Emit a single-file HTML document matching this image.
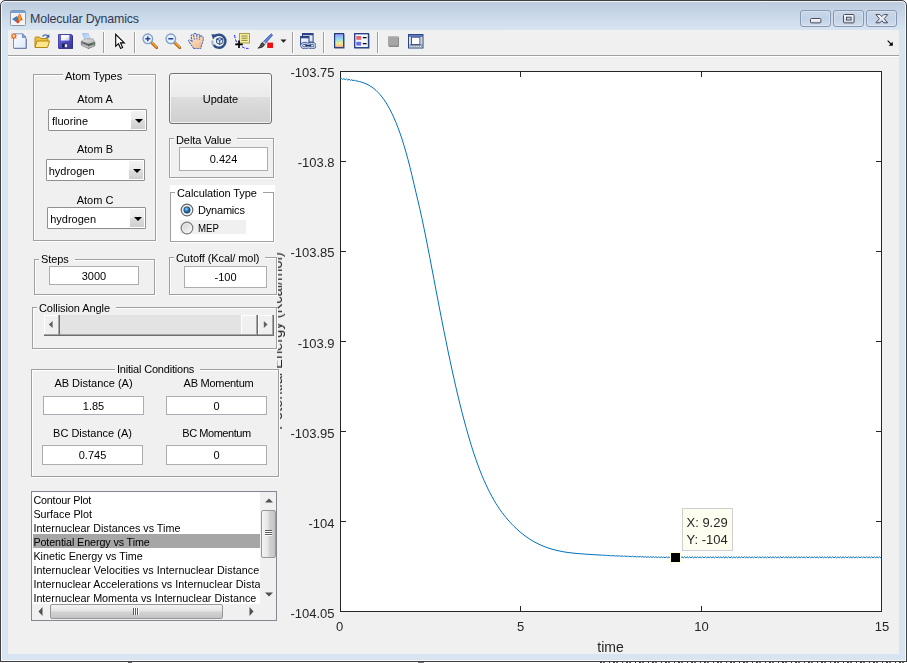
<!DOCTYPE html>
<html><head><meta charset="utf-8"><title>Molecular Dynamics</title>
<style>
html,body{margin:0;padding:0}
body{width:907px;height:663px;overflow:hidden;background:#fff;position:relative;font-family:"Liberation Sans",sans-serif;font-size:11px;color:#000}
.a{position:absolute}
#win{left:0;top:0;width:907px;height:662px;border-radius:5px 5px 0 0;background:linear-gradient(#bccbdc 0px,#c6d5e6 12px,#d7e4f1 30px,#d8e4f2 100%);overflow:hidden}
#hl{left:1px;top:1px;width:905px;height:660px;box-sizing:border-box;border:1px solid rgba(255,255,255,.75);border-radius:4px 4px 0 0}
#client{left:8px;top:30px;width:891px;height:624px;background:#f0f0f0;overflow:hidden}
#title{left:30px;top:11px;font-size:12.4px;color:#2e3a55;line-height:16px;white-space:nowrap;letter-spacing:-0.15px}
.wb{top:10px;width:31px;height:17px;box-sizing:border-box;border:1px solid #8797b4;border-radius:3px;background:linear-gradient(#c9d7e8,#c2d2e5 50%,#cfdcec);box-shadow:inset 0 0 0 1px rgba(255,255,255,.3)}
.lbl{white-space:nowrap;line-height:14px;font-size:11px}
.c{text-align:center}
.panel{box-sizing:border-box;border:1px solid #a0a0a0;box-shadow:1px 1px 0 #fff, inset 1px 1px 0 #fff;background:#f0f0f0}
.ptitle{letter-spacing:-0.08px;background:#f0f0f0;white-space:nowrap;line-height:14px;font-size:11px;padding:0 6px 0 2px}
.edit{box-sizing:border-box;border:1px solid #abadb3;background:#fff;text-align:center;font-size:11px}
.pop{box-sizing:border-box;border:1px solid #8e8f8f;background:#fff;border-radius:1px}
.pop .t{position:absolute;left:3px;top:0;line-height:22px;font-size:11px}
.pop .b{position:absolute;right:1px;top:1px;bottom:1px;width:14px;background:linear-gradient(#f2f2f2,#ebebeb 48%,#dddddd 52%,#cfcfcf);}
.pop .b:after{content:"";position:absolute;left:3.5px;top:8px;border:4px solid transparent;border-top:4px solid #000;border-bottom:0}
.li{left:1px;width:227px;height:14px;line-height:14px;font-size:10.75px;white-space:nowrap;overflow:hidden;padding-left:0.4px;box-sizing:border-box}
.tk{font-size:13.33px;color:#262626;white-space:nowrap;line-height:16px}
.sep{top:2px;width:1px;height:21px;background:#a0a0a0}
</style></head><body>
<div id="win" class="a">
<div id="hl" class="a"></div>
<!-- title bar -->
<svg class="a" style="left:10px;top:10px" width="16" height="16" viewBox="0 0 16 16">
<rect x="0.5" y="0.5" width="15" height="15" rx="1" fill="#f4f4f4" stroke="#8c97a6"/>
<rect x="1" y="1" width="14" height="2" fill="#6fa3d3"/>
<path d="M2 9 L7 6 L9 9 L6 12 Z" fill="#3e7fc4"/>
<path d="M6 12 L9 4 Q10 3 10.6 5 L13 11 Q11.5 9.5 10.5 10.5 Q9 13 7.5 13.5 Z" fill="#d94a1e"/>
<path d="M8.2 8 L9.6 4 Q10 3.6 10.4 5 L11 9 Q10 10 9 12 Z" fill="#f5a623"/>
</svg>
<div id="title" class="a">Molecular Dynamics</div>
<svg width="0" height="0" class="a"><defs><linearGradient id="gl" x1="0" y1="0" x2="0" y2="1"><stop offset="0" stop-color="#ffffff"/><stop offset="1" stop-color="#d2d6dc"/></linearGradient></defs></svg>
<div class="a wb" style="left:800px"><svg class="a" style="left:9px;top:7px" width="12" height="6"><rect x="0.5" y="0.5" width="10.4" height="4.4" rx="1" fill="url(#gl)" stroke="#454b5c"/></svg></div>
<div class="a wb" style="left:833px"><svg class="a" style="left:9px;top:3px" width="12" height="10"><rect x="0.5" y="0.5" width="10.6" height="8.4" rx="1" fill="url(#gl)" stroke="#454b5c"/><rect x="3.5" y="3.2" width="4.6" height="2.8" fill="#c6d5e7" stroke="#454b5c"/></svg></div>
<div class="a wb" style="left:866px"><svg class="a" style="left:8px;top:3px" width="14" height="10" viewBox="0 0 14 10"><path d="M0.9 0.6 H4.9 L6.8 2.6 L8.7 0.6 H12.7 L9.2 4.7 L12.7 8.8 H8.7 L6.8 6.8 L4.9 8.8 H0.9 L4.4 4.7 Z" fill="url(#gl)" stroke="#454b5c" stroke-width="1" stroke-linejoin="round"/></svg></div>

<div id="client" class="a">
<!-- toolbar (client coords: subtract 8,30) -->
<div class="a" id="tb" style="left:0;top:0;width:891px;height:25px;background:#f0f0f0;border-bottom:1px solid #a0a0a0"></div>
<div class="a" style="left:0;top:26px;width:891px;height:1px;background:#fff"></div>
<!-- New -->
<svg class="a" style="left:3px;top:3px" width="16" height="16" viewBox="0 0 16 16">
<defs><linearGradient id="pg" x1="0" y1="0" x2="1" y2="1"><stop offset="0" stop-color="#ffffff"/><stop offset="1" stop-color="#dbe8fb"/></linearGradient></defs>
<path d="M2.5 0.8 H11.4 L15 4.4 V15.2 H2.5 Z" fill="url(#pg)" stroke="#7c90c4" stroke-width="1"/>
<path d="M11.4 0.8 V4.4 H15 Z" fill="#8ea2d6" stroke="#6a80ba" stroke-width=".8" stroke-linejoin="round"/>
<path d="M3 15.6 H15.5 V6" stroke="#5a678f" stroke-width=".9" fill="none" opacity=".75"/>
<circle cx="2.8" cy="3" r="2" fill="#f8d070" stroke="#e2663a" stroke-width="1.1"/>
<path d="M2.8 -0.4 V0.3 M2.8 5.7 V6.4 M-0.6 3 H0.1 M5.5 3 H6.2 M0.3 0.5 L0.9 1.1 M5.3 0.5 L4.7 1.1 M0.3 5.5 L0.9 4.9 M5.3 5.5 L4.7 4.9" stroke="#e2663a" stroke-width="1"/>
</svg>
<!-- Open -->
<svg class="a" style="left:26px;top:3px" width="16" height="16" viewBox="0 0 16 16">
<path d="M8.5 3.5 Q11 0.5 14 3" fill="none" stroke="#4d6fb0" stroke-width="1.3"/>
<path d="M15.3 1 V4.8 H11.6 Z" fill="#3b5fa8"/>
<path d="M1 14 V5 Q1 4 2 4 H5.5 L7 5.5 H13 Q14 5.5 14 6.5 V8" fill="#e9c04a" stroke="#b8860b" stroke-width="1"/>
<path d="M1 14.5 L3 8 H15.5 L13.5 14.5 Z" fill="#fbe68a" stroke="#b8860b" stroke-width="1" stroke-linejoin="round"/>
</svg>
<!-- Save -->
<svg class="a" style="left:49px;top:3px" width="16" height="16" viewBox="0 0 16 16">
<defs><linearGradient id="sv" x1="0" y1="0" x2="1" y2="1"><stop offset="0" stop-color="#7270e2"/><stop offset=".5" stop-color="#4f4dc6"/><stop offset="1" stop-color="#35349a"/></linearGradient><linearGradient id="sl" x1="0" y1="0" x2="1" y2="1"><stop offset="0" stop-color="#ffffff"/><stop offset=".55" stop-color="#f0f2fa"/><stop offset="1" stop-color="#b9c0e0"/></linearGradient></defs>
<path d="M1.5 1.5 H14.4 L15.4 2.5 V15.3 H1.5 Z" fill="url(#sv)" stroke="#3a3aa6" stroke-width=".9"/>
<path d="M15.6 3 V15.7 H2.2" stroke="#23226a" stroke-width=".9" fill="none" opacity=".8"/>
<rect x="4" y="2" width="8.4" height="5.6" fill="url(#sl)"/>
<rect x="5.2" y="10.6" width="5.4" height="3.8" fill="#1e1e38"/>
<rect x="7.8" y="11.2" width="2.4" height="3" fill="#ececf4"/>
</svg>
<!-- Print -->
<svg class="a" style="left:72px;top:3px" width="16" height="16" viewBox="0 0 16 16">
<defs><linearGradient id="pp" x1="0" y1="0" x2="1" y2="1"><stop offset="0" stop-color="#9cc6f6"/><stop offset="1" stop-color="#dcecfc"/></linearGradient><linearGradient id="pt" x1="0" y1="0" x2="1" y2="1"><stop offset="0" stop-color="#e8e8e8"/><stop offset="1" stop-color="#b0b0b0"/></linearGradient></defs>
<path d="M2.4 0.3 H8 L10.4 5.8 L4.6 6.6 Z" fill="url(#pp)" stroke="#9ab4dc" stroke-width=".6"/>
<path d="M1.2 8.4 L5.4 5.8 L13 5.9 L14.9 9.2 L8.5 11.2 Z" fill="url(#pt)" stroke="#8c8c8c" stroke-width=".6" stroke-linejoin="round"/>
<path d="M1.2 8.4 L8.5 11.2 V15.5 L1.5 12.3 Z" fill="#9c9c9c" stroke="#666" stroke-width=".6" stroke-linejoin="round"/>
<path d="M8.5 11.2 L14.9 9.2 V12.7 L8.5 15.5 Z" fill="#7e7e7e" stroke="#5a5a5a" stroke-width=".6" stroke-linejoin="round"/>
<path d="M2.2 9.6 L8.5 12.1 L14 10.4" stroke="#4c4c4c" stroke-width=".9" fill="none"/>
<path d="M2.2 11.3 L8.5 13.7 L14 12 V12.8 L8.5 14.7 L2.2 12.2 Z" fill="#f6f6f6" stroke="#9a9a9a" stroke-width=".4"/>
<rect x="12.2" y="9.7" width="1.3" height="1.3" fill="#35b135"/>
</svg>
<div class="a sep" style="left:95px"></div><div class="a sep" style="left:96px;background:#fff"></div>
<!-- Cursor -->
<svg class="a" style="left:104px;top:3px" width="16" height="16" viewBox="0 0 16 16">
<path d="M3.7 1.3 V13.3 L6.5 10.7 L8.6 15.4 L10.6 14.5 L8.5 9.9 H12.3 Z" fill="#fff" stroke="#000" stroke-width="1.1" stroke-linejoin="miter"/>
</svg>
<div class="a sep" style="left:126px"></div><div class="a sep" style="left:127px;background:#fff"></div>
<!-- Zoom in -->
<svg class="a" style="left:134px;top:3px" width="16" height="16" viewBox="0 0 16 16">
<path d="M9.5 9.5 L14.8 14.8" stroke="#b86a14" stroke-width="3" stroke-linecap="round"/>
<path d="M9.6 9 L14.6 14" stroke="#f2a640" stroke-width="1.3" stroke-linecap="round"/>
<circle cx="5.8" cy="5.8" r="4.8" fill="#e4f1fc" stroke="#7f9fc9" stroke-width="1.3"/>
<path d="M3.3 5.8 H8.3 M5.8 3.3 V8.3" stroke="#2a3f9a" stroke-width="1.4"/>
</svg>
<!-- Zoom out -->
<svg class="a" style="left:157px;top:3px" width="16" height="16" viewBox="0 0 16 16">
<path d="M9.5 9.5 L14.8 14.8" stroke="#b86a14" stroke-width="3" stroke-linecap="round"/>
<path d="M9.6 9 L14.6 14" stroke="#f2a640" stroke-width="1.3" stroke-linecap="round"/>
<circle cx="5.8" cy="5.8" r="4.8" fill="#e4f1fc" stroke="#7f9fc9" stroke-width="1.3"/>
<path d="M3.3 5.8 H8.3" stroke="#2a3f9a" stroke-width="1.4"/>
</svg>
<!-- Hand -->
<svg class="a" style="left:180px;top:3px" width="17" height="16" viewBox="0 0 17 16">
<defs><linearGradient id="hd" x1="0" y1="0" x2="0.6" y2="1"><stop offset="0" stop-color="#fdf0e2"/><stop offset="1" stop-color="#f2bf92"/></linearGradient></defs>
<path d="M6 15.8 L1.8 10 L0.5 7.7 Q0.6 6.4 1.9 6.6 L4.1 8.8 L3 3 Q3.2 1.2 4.6 1.5 L5.5 2.4 L5.8 1 Q7 -0.2 8.4 0.9 L8.8 2.2 Q10.2 0.5 11.4 1.7 L11.8 3.3 Q13.6 2.1 14.8 3.7 Q15.9 6 14.6 9.4 Q13.4 12.4 12.6 15.8 Z" fill="url(#hd)" stroke="#2f55c4" stroke-width="1" stroke-dasharray="2.2 .7" stroke-linejoin="round"/>
<path d="M5.6 2.4 L6.4 6.6 M8.8 2.2 L9 6.4 M11.8 3.3 L11.4 6.8" stroke="#2f55c4" stroke-width=".9" fill="none" stroke-dasharray="2 .8"/>
</svg>
<!-- Rotate -->
<svg class="a" style="left:203px;top:3px" width="16" height="16" viewBox="0 0 16 16">
<path d="M3.6 3.4 A6.5 6.5 0 1 1 2.6 12" fill="none" stroke="#2f4f86" stroke-width="2.4"/>
<path d="M2.2 12.4 A6.5 6.5 0 0 1 1.6 7.6" fill="none" stroke="#9fb2cf" stroke-width="2"/>
<path d="M0.4 1.2 L6 1.6 L2 6.4 Z" fill="#2f4f86"/>
<path d="M5.6 6 L8.8 4.8 L11.8 6 V9.8 L8.7 11.4 L5.6 9.8 Z" fill="#dfe8f6" stroke="#2f4f86" stroke-width="1" stroke-linejoin="round"/>
<path d="M5.6 6 L8.7 7.3 L11.8 6 M8.7 7.3 V11.4" fill="none" stroke="#2f4f86" stroke-width="1"/>
</svg>
<!-- Data cursor -->
<svg class="a" style="left:226px;top:3px" width="16" height="16" viewBox="0 0 16 16">
<path d="M0.6 2 Q1.2 8 4 11 " fill="none" stroke="#1a1aff" stroke-width="1" stroke-dasharray="3 1.5"/>
<path d="M8 13.6 Q10.5 15.6 14.5 15.4" fill="none" stroke="#1a1aff" stroke-width="1" stroke-dasharray="3 1.5"/>
<rect x="5.5" y="0.5" width="10" height="9.5" fill="#f3eea0" stroke="#a79f45" stroke-width="1"/>
<path d="M7.5 3 H13.5 M7.5 5.2 H13.5 M7.5 7.4 H13.5" stroke="#8c8540" stroke-width="1"/>
<path d="M5 7.5 V15 M1.2 11.3 H8.8" stroke="#000" stroke-width="1.7"/>
</svg>
<!-- Brush -->
<svg class="a" style="left:249px;top:3px" width="16" height="16" viewBox="0 0 16 16">
<path d="M14.2 0.8 L15.6 2.2 L8.6 10.2 L6.6 8.4 Z" fill="#5f86d6" stroke="#3555a4" stroke-width=".8"/>
<path d="M6.9 8 L9 10 L7.6 11.6 L5.4 9.6 Z" fill="#c9d2e2" stroke="#6e7890" stroke-width=".6"/>
<path d="M5.4 9.5 L7.7 11.7 Q6 15.2 0.8 15.2 Q3.2 13.6 3.6 11.6 Q4 10 5.4 9.5 Z" fill="#4a4a4a" stroke="#222" stroke-width=".6"/>
<rect x="10.2" y="9.6" width="5.8" height="5.4" fill="#ee1111"/>
</svg>
<svg class="a" style="left:272px;top:9px" width="7" height="5"><path d="M0.5 0.5 H6.5 L3.5 3.8 Z" fill="#222"/></svg>
<div class="a sep" style="left:284px"></div><div class="a sep" style="left:285px;background:#fff"></div>
<!-- Link -->
<svg class="a" style="left:292px;top:3px" width="16" height="16" viewBox="0 0 16 16">
<defs><linearGradient id="wn" x1="0" y1="0" x2="1" y2="1"><stop offset="0" stop-color="#ffffff"/><stop offset="1" stop-color="#d4dff0"/></linearGradient></defs>
<rect x="2.5" y="0.5" width="10.6" height="8.6" fill="url(#wn)" stroke="#2a4488" stroke-width="1"/>
<rect x="2.5" y="0.5" width="10.6" height="1.8" fill="#2a4488"/>
<rect x="0.6" y="3.5" width="8.4" height="8" fill="url(#wn)" stroke="#2a4488" stroke-width="1"/>
<rect x="0.6" y="3.5" width="8.4" height="1.8" fill="#2a4488"/>
<ellipse cx="5" cy="12.6" rx="3.4" ry="2.2" fill="none" stroke="#2c4a88" stroke-width="2.6"/>
<ellipse cx="11.6" cy="12.6" rx="3.4" ry="2.2" fill="none" stroke="#2c4a88" stroke-width="2.6"/>
<ellipse cx="5" cy="12.6" rx="3.4" ry="2.2" fill="none" stroke="#c4d3ea" stroke-width="1.3"/>
<ellipse cx="11.6" cy="12.6" rx="3.4" ry="2.2" fill="none" stroke="#c4d3ea" stroke-width="1.3"/>
<path d="M5.4 12.6 H11.2" stroke="#1c2f60" stroke-width="1.5"/>
</svg>
<div class="a sep" style="left:315px"></div><div class="a sep" style="left:316px;background:#fff"></div>
<!-- Colorbar -->
<svg class="a" style="left:323px;top:3px" width="16" height="16" viewBox="0 0 16 16">
<defs><linearGradient id="cb" x1="0" y1="0" x2="0" y2="1"><stop offset="0" stop-color="#9d98f2"/><stop offset=".2" stop-color="#98b8f4"/><stop offset=".42" stop-color="#92e4e8"/><stop offset=".7" stop-color="#f4ea8c"/><stop offset="1" stop-color="#f7a994"/></linearGradient></defs>
<rect x="3.6" y="0.6" width="9" height="14" fill="url(#cb)" stroke="#1f3a80" stroke-width="1.2"/>
<path d="M4 15.3 H13.3 V1.5" stroke="#7c86a0" fill="none" stroke-width=".8"/>
</svg>
<!-- Legend -->
<svg class="a" style="left:346px;top:3px" width="16" height="16" viewBox="0 0 16 16">
<rect x="0.7" y="0.7" width="13.8" height="14" fill="#f3f6fc" stroke="#1f3a80" stroke-width="1.3"/><path d="M1.2 15.4 H15.2 V1.6" stroke="#6a7696" stroke-width=".8" fill="none" opacity=".7"/>
<rect x="2.3" y="3" width="4.8" height="3.8" fill="#e8636b"/>
<rect x="2.3" y="8.8" width="4.8" height="3.8" fill="#6a6ee6"/>
<path d="M8.8 4.6 H12.6 M8.8 10.7 H12.6" stroke="#000" stroke-width="1.3"/>
</svg>
<div class="a sep" style="left:369px"></div><div class="a sep" style="left:370px;background:#fff"></div>
<!-- gray square -->
<svg class="a" style="left:377px;top:3px" width="16" height="16" viewBox="0 0 16 16">
<rect x="3.5" y="3.5" width="10.5" height="10.5" rx="1" fill="#8a8a8a"/>
<rect x="3" y="3" width="10" height="9.5" rx="1" fill="#a6a6a6"/>
<rect x="3" y="3" width="10" height="1.2" fill="#b8b8b8"/>
</svg>
<!-- film -->
<svg class="a" style="left:400px;top:3px" width="16" height="16" viewBox="0 0 16 16">
<rect x="0.5" y="1.5" width="14.5" height="13.5" fill="#f1f1e6" stroke="#2a4488" stroke-width="1"/>
<rect x="0.5" y="1.5" width="14.5" height="2.2" fill="#2f4f9a"/>
<rect x="1" y="2.3" width="13.5" height=".7" fill="#6f8ccc"/>
<rect x="3.5" y="4.2" width="8.4" height="7.4" fill="#fff" stroke="#2a4488" stroke-width=".9"/>
<path d="M2.2 4.6 V11.4 M13.3 4.6 V11.4" stroke="#2a4488" stroke-width=".7" stroke-dasharray=".8 1.2" opacity=".7"/>
<path d="M1.2 12.1 H14.4" stroke="#2a4488" stroke-width=".8"/>
<path d="M1.6 13.4 H14" stroke="#2a4488" stroke-width=".8" stroke-dasharray=".9 1" opacity=".7"/>
</svg>
<!-- right arrow -->
<svg class="a" style="left:879px;top:9.5px" width="6.6" height="6.6" viewBox="0 0 8 8"><path d="M0.8 0.8 L6 6" stroke="#000" stroke-width="1.4"/><path d="M7 2 V7 H2 Z" fill="#000"/></svg>

<!-- axes -->
<div class="a" style="left:269px;top:200px;width:8.6px;height:230px;overflow:hidden"><div class="a" id="ylab" style="left:0.2px;top:111.3px;width:0;height:0"><div class="a" style="will-change:transform;transform:translate(-50%,-50%) rotate(-90deg);white-space:nowrap;font-size:14.67px;line-height:16px;color:#262626">Potential Energy (Kcal/mol)</div></div></div>
<svg class="a" style="left:0;top:0;will-change:transform" width="891" height="624" viewBox="8 30 891 624">
<rect x="340" y="71" width="542" height="541" fill="#fff"/>
<g stroke="#262626" stroke-width="1" shape-rendering="crispEdges" fill="none">
<rect x="340.5" y="71.5" width="541" height="540"/>
<path d="M520.5 611 V606 M701.5 611 V606 M520.5 72 V77 M701.5 72 V77"/>
<path d="M341 161.5 H346 M341 251.5 H346 M341 341.5 H346 M341 431.5 H346 M341 521.5 H346"/>
<path d="M881 161.5 H876 M881 251.5 H876 M881 341.5 H876 M881 431.5 H876 M881 521.5 H876"/>
</g>
<path d="M340.0 78.9 L341.3 78.2 L342.6 79.4 L343.9 78.6 L345.2 79.8 L346.5 78.9 L347.8 80.1 L349.1 79.3 L350.4 80.3 L351.7 79.8 L353.0 80.6 L354.3 80.2 L355.6 80.9 L356.9 80.8 L358.2 81.4 L359.5 81.5 L360.8 81.9 L362.0 82.3 L364.0 83.0 L366.0 83.8 L368.0 84.8 L370.0 85.9 L372.0 87.2 L374.0 88.7 L376.0 90.4 L378.0 92.4 L380.0 94.5 L382.0 97.0 L384.0 99.7 L386.0 102.7 L388.0 106.0 L390.0 109.6 L392.0 113.6 L394.0 117.9 L396.0 122.6 L398.0 127.7 L400.0 133.2 L402.0 139.1 L404.0 145.5 L406.0 152.3 L408.0 159.6 L410.0 167.3 L412.0 175.5 L414.0 184.2 L416.0 192.7 L418.0 201.0 L420.0 209.6 L422.0 218.7 L424.0 228.3 L426.0 238.1 L428.0 248.3 L430.0 258.6 L432.0 269.1 L434.0 279.6 L436.0 290.2 L438.0 300.6 L440.0 311.0 L442.0 321.2 L444.0 331.3 L446.0 341.2 L448.0 351.0 L450.0 360.5 L452.0 369.8 L454.0 378.8 L456.0 387.6 L458.0 396.1 L460.0 404.3 L462.0 412.3 L464.0 419.9 L466.0 427.3 L468.0 434.4 L470.0 441.2 L472.0 447.7 L474.0 453.9 L476.0 459.7 L478.0 465.3 L480.0 470.6 L482.0 475.6 L484.0 480.3 L486.0 484.7 L488.0 489.0 L490.0 492.9 L492.0 496.7 L494.0 500.2 L496.0 503.6 L498.0 506.7 L500.0 509.7 L502.0 512.5 L504.0 515.1 L506.0 517.6 L508.0 520.0 L510.0 522.2 L512.0 524.4 L514.0 526.4 L516.0 528.3 L518.0 530.1 L520.0 531.9 L522.0 533.5 L524.0 535.1 L526.0 536.6 L528.0 537.9 L530.0 539.3 L532.0 540.5 L534.0 541.7 L536.0 542.7 L538.0 543.8 L540.0 544.7 L542.0 545.6 L544.0 546.4 L546.0 547.2 L548.0 547.9 L550.0 548.5 L552.0 549.2 L554.0 549.7 L556.0 550.2 L558.0 550.7 L560.0 551.1 L562.0 551.5 L564.0 551.9 L566.0 552.2 L568.0 552.5 L570.0 552.7 L572.0 553.0 L574.0 553.2 L576.0 553.4 L578.0 553.6 L580.0 553.7 L582.0 553.9 L584.0 554.0 L586.0 554.2 L588.0 554.3 L590.0 554.4 L592.0 554.6 L594.0 554.7 L596.0 554.8 L598.0 554.9 L600.0 555.1 L601.3 555.1 L602.6 555.2 L603.9 555.2 L605.2 555.4 L606.5 555.3 L607.8 555.5 L609.1 555.5 L610.4 555.7 L611.7 555.6 L613.0 555.8 L614.3 555.7 L615.6 556.0 L616.9 555.8 L618.2 556.1 L619.5 555.8 L620.8 556.3 L622.1 555.9 L623.4 556.4 L624.7 556.0 L626.0 556.5 L627.3 556.1 L628.6 556.6 L629.9 556.2 L631.2 556.8 L632.5 556.2 L633.8 556.9 L635.1 556.3 L636.4 557.0 L637.7 556.4 L639.0 557.1 L640.3 556.4 L641.6 557.2 L642.9 556.5 L644.2 557.3 L645.5 556.5 L646.8 557.4 L648.1 556.6 L649.4 557.5 L650.7 556.6 L652.0 557.5 L653.3 556.7 L654.6 557.6 L655.9 556.7 L657.2 557.6 L658.5 556.8 L659.8 557.7 L661.1 556.8 L662.4 557.7 L663.7 556.9 L665.0 557.8 L666.3 556.9 L667.6 557.8 L668.9 556.9 L670.2 557.8 L671.5 556.8 L672.8 557.8 L674.1 556.8 L675.4 557.8 L676.7 556.8 L678.0 557.8 L679.3 556.8 L680.6 557.8 L681.9 556.8 L683.2 557.8 L684.5 556.8 L685.8 557.8 L687.1 556.8 L688.4 557.8 L689.7 556.8 L691.0 557.8 L692.3 556.8 L693.6 557.8 L694.9 556.8 L696.2 557.8 L697.5 556.8 L698.8 557.8 L700.1 556.8 L701.4 557.8 L702.7 556.8 L704.0 557.8 L705.3 556.8 L706.6 557.8 L707.9 556.8 L709.2 557.8 L710.5 556.8 L711.8 557.8 L713.1 556.8 L714.4 557.8 L715.7 556.8 L717.0 557.8 L718.3 556.8 L719.6 557.8 L720.9 556.8 L722.2 557.8 L723.5 556.8 L724.8 557.8 L726.1 556.8 L727.4 557.8 L728.7 556.8 L730.0 557.8 L731.3 556.8 L732.6 557.8 L733.9 556.8 L735.2 557.8 L736.5 556.8 L737.8 557.8 L739.1 556.8 L740.4 557.8 L741.7 556.8 L743.0 557.8 L744.3 556.8 L745.6 557.8 L746.9 556.8 L748.2 557.8 L749.5 556.8 L750.8 557.8 L752.1 556.8 L753.4 557.8 L754.7 556.8 L756.0 557.8 L757.3 556.8 L758.6 557.8 L759.9 556.8 L761.2 557.8 L762.5 556.8 L763.8 557.8 L765.1 556.8 L766.4 557.8 L767.7 556.8 L769.0 557.8 L770.3 556.8 L771.6 557.8 L772.9 556.8 L774.2 557.8 L775.5 556.8 L776.8 557.8 L778.1 556.8 L779.4 557.8 L780.7 556.8 L782.0 557.8 L783.3 556.8 L784.6 557.8 L785.9 556.8 L787.2 557.8 L788.5 556.8 L789.8 557.8 L791.1 556.8 L792.4 557.8 L793.7 556.8 L795.0 557.8 L796.3 556.8 L797.6 557.8 L798.9 556.8 L800.2 557.8 L801.5 556.8 L802.8 557.8 L804.1 556.8 L805.4 557.8 L806.7 556.8 L808.0 557.8 L809.3 556.8 L810.6 557.8 L811.9 556.8 L813.2 557.8 L814.5 556.8 L815.8 557.8 L817.1 556.8 L818.4 557.8 L819.7 556.8 L821.0 557.8 L822.3 556.8 L823.6 557.8 L824.9 556.8 L826.2 557.8 L827.5 556.8 L828.8 557.8 L830.1 556.8 L831.4 557.8 L832.7 556.8 L834.0 557.8 L835.3 556.8 L836.6 557.8 L837.9 556.8 L839.2 557.8 L840.5 556.8 L841.8 557.8 L843.1 556.8 L844.4 557.8 L845.7 556.8 L847.0 557.8 L848.3 556.8 L849.6 557.8 L850.9 556.8 L852.2 557.8 L853.5 556.8 L854.8 557.8 L856.1 556.8 L857.4 557.8 L858.7 556.8 L860.0 557.8 L861.3 556.8 L862.6 557.8 L863.9 556.8 L865.2 557.8 L866.5 556.8 L867.8 557.8 L869.1 556.8 L870.4 557.8 L871.7 556.8 L873.0 557.8 L874.3 556.8 L875.6 557.8 L876.9 556.8 L878.2 557.8 L879.5 556.8 L880.8 557.8 L881.0 557.3" fill="none" stroke="#0072bd" stroke-width="1" stroke-linejoin="round"/>
<rect x="670.5" y="552.5" width="10" height="10" fill="#000" stroke="#ffffd8" stroke-width="1"/>
<rect x="682.5" y="508.5" width="50" height="42" fill="#fefef0" stroke="#cfcfcf" stroke-width="1"/>
<g font-family="Liberation Sans, sans-serif" font-size="13px" fill="#262626">
<text x="686.5" y="527">X: 9.29</text>
<text x="686.5" y="544">Y: -104</text>
<g text-anchor="end">
<text x="334.5" y="76.5">-103.75</text>
<text x="334.5" y="167">-103.8</text>
<text x="334.5" y="257.2">-103.85</text>
<text x="334.5" y="347.5">-103.9</text>
<text x="334.5" y="437.5">-103.95</text>
<text x="334.5" y="527.5">-104</text>
<text x="334.5" y="617.5">-104.05</text>
</g>
<g text-anchor="middle">
<text x="339.6" y="631">0</text>
<text x="520.5" y="631">5</text>
<text x="701.4" y="631">10</text>
<text x="882" y="631">15</text>
<text x="610.5" y="651.7" font-size="14px">time</text>
</g>
</g>
</svg>

<!-- panels -->
<div class="a" style="left:-8px;top:-30px;width:907px;height:663px">
<!-- Atom Types -->
<div class="a panel" style="left:33px;top:74px;width:123px;height:167px"></div>
<div class="a ptitle" style="left:63px;top:69px">Atom Types</div>
<div class="a lbl c" style="left:45px;top:92px;width:100px">Atom A</div>
<div class="a pop" style="left:48px;top:109px;width:99px;height:22px"><span class="t">fluorine</span><span class="b"></span></div>
<div class="a lbl c" style="left:45px;top:142px;width:100px">Atom B</div>
<div class="a pop" style="left:46px;top:159px;width:99px;height:22px"><span class="t" style="left:1.7px">hydrogen</span><span class="b"></span></div>
<div class="a lbl c" style="left:45px;top:193px;width:100px">Atom C</div>
<div class="a pop" style="left:47px;top:207px;width:99px;height:22px"><span class="t" style="left:2.2px">hydrogen</span><span class="b"></span></div>
<!-- Update -->
<div class="a" style="left:169px;top:73px;width:103px;height:51px;box-sizing:border-box;border:1px solid #707070;border-radius:3px;background:linear-gradient(#f2f2f2 0,#ebebeb 46%,#dddddd 48%,#cfcfcf 100%);box-shadow:inset 0 0 0 1px rgba(255,255,255,.7);text-align:center;line-height:51px;font-size:11px">Update</div>
<!-- Delta -->
<div class="a panel" style="left:169px;top:138px;width:105px;height:40px"></div>
<div class="a ptitle" style="left:174px;top:133px">Delta Value</div>
<div class="a edit" style="left:179px;top:147px;width:89px;height:24px;line-height:22px">0.424</div>
<!-- Calc type -->
<div class="a" style="left:170px;top:185px;width:105px;height:58px;background:#fff"></div>
<div class="a panel" style="left:170px;top:192px;width:104px;height:50px;background:#fff"></div>
<div class="a ptitle" style="left:175px;top:186px;background:#fff">Calculation Type</div>
<div class="a" style="left:180px;top:220px;width:66px;height:14px;background:#f0f0f0"></div>
<svg class="a" style="left:180px;top:203px" width="14" height="14" viewBox="0 0 14 14"><defs><radialGradient id="rb" cx=".4" cy=".35" r=".7"><stop offset="0" stop-color="#9fd8f6"/><stop offset=".45" stop-color="#2a7fc0"/><stop offset="1" stop-color="#0b3f78"/></radialGradient><linearGradient id="rg" x1="0" y1="0" x2="1" y2="1"><stop offset="0" stop-color="#cfcfcf"/><stop offset="1" stop-color="#fafafa"/></linearGradient></defs><circle cx="7" cy="7" r="5.8" fill="url(#rg)" stroke="#666" stroke-width="1.2"/><circle cx="7" cy="7" r="4.6" fill="none" stroke="#fff" stroke-width=".8" opacity=".7"/><circle cx="7" cy="7" r="3.2" fill="url(#rb)" stroke="#123f6e" stroke-width=".6"/></svg>
<div class="a lbl" style="left:198px;top:203px;letter-spacing:-0.2px">Dynamics</div>
<svg class="a" style="left:180px;top:221px" width="14" height="14" viewBox="0 0 14 14"><circle cx="7" cy="7" r="5.8" fill="url(#rg)" stroke="#7a7a7a" stroke-width="1.2"/><circle cx="7" cy="7" r="4.6" fill="none" stroke="#fff" stroke-width=".8" opacity=".6"/></svg>
<div class="a lbl" style="left:198px;top:221px;transform:scaleX(0.88);transform-origin:0 0">MEP</div>
<!-- Steps -->
<div class="a panel" style="left:34px;top:259px;width:121px;height:36px"></div>
<div class="a ptitle" style="left:39px;top:252px">Steps</div>
<div class="a edit" style="left:49px;top:266px;width:90px;height:19px;line-height:18px">3000</div>
<!-- Cutoff -->
<div class="a panel" style="left:169px;top:257px;width:108px;height:38px"></div>
<div class="a ptitle" style="left:174px;top:251px">Cutoff (Kcal/ mol)</div>
<div class="a edit" style="left:184px;top:266px;width:83px;height:22px;line-height:21px">-100</div>
<!-- Collision Angle -->
<div class="a panel" style="left:32px;top:307px;width:245px;height:42px"></div>
<div class="a ptitle" style="left:37px;top:301px">Collision Angle</div>
<div class="a" style="left:44px;top:315px;width:230px;height:21px;background:#e3e3e3;border-bottom:1px solid #6d6d6d;box-shadow:inset 0 -1px 0 #a6a6a6;box-sizing:border-box"></div>
<div class="a" style="left:44px;top:315px;width:16px;height:21px;box-sizing:border-box;background:#f0f0f0;border-right:1px solid #6d6d6d;border-bottom:1px solid #6d6d6d;box-shadow:inset -1px -1px 0 #a6a6a6,inset 1px 1px 0 #fff"><svg class="a" style="left:4px;top:5px" width="6" height="9"><path d="M4.6 1 V8 L0.8 4.5 Z" fill="#606060"/></svg></div>
<div class="a" style="left:241px;top:315px;width:17px;height:21px;box-sizing:border-box;background:#f0f0f0;border-right:1px solid #6d6d6d;border-bottom:1px solid #6d6d6d;box-shadow:inset -1px -1px 0 #a6a6a6,inset 1px 1px 0 #fff"></div>
<div class="a" style="left:258px;top:315px;width:16px;height:21px;box-sizing:border-box;background:#f0f0f0;border-right:1px solid #6d6d6d;border-bottom:1px solid #6d6d6d;box-shadow:inset -1px -1px 0 #a6a6a6,inset 1px 1px 0 #fff"><svg class="a" style="left:5px;top:5px" width="6" height="9"><path d="M0.8 1 V8 L4.6 4.5 Z" fill="#606060"/></svg></div>
<!-- Initial Conditions -->
<div class="a panel" style="left:31px;top:369px;width:248px;height:108px"></div>
<div class="a ptitle" style="left:115px;top:362px;letter-spacing:-0.2px">Initial Conditions</div>
<div class="a lbl c" style="left:43px;top:376px;width:101px">AB Distance (A)</div>
<div class="a lbl c" style="left:168px;top:376px;width:101px;letter-spacing:-0.27px">AB Momentum</div>
<div class="a edit" style="left:43px;top:396px;width:101px;height:19px;line-height:18px">1.85</div>
<div class="a edit" style="left:166px;top:396px;width:101px;height:19px;line-height:18px">0</div>
<div class="a lbl c" style="left:42px;top:426px;width:101px">BC Distance (A)</div>
<div class="a lbl c" style="left:166px;top:426px;width:101px;letter-spacing:-0.46px">BC Momentum</div>
<div class="a edit" style="left:42px;top:445px;width:101px;height:20px;line-height:19px">0.745</div>
<div class="a edit" style="left:166px;top:445px;width:101px;height:20px;line-height:19px">0</div>
<!-- Listbox -->
<div class="a" style="left:31px;top:491px;width:246px;height:130px;box-sizing:border-box;border:1px solid #828790;background:#fff;overflow:hidden">
<div class="a li" style="top:1px;letter-spacing:-0.17px">Contour Plot</div>
<div class="a li" style="top:15px">Surface Plot</div>
<div class="a li" style="top:29px">Internuclear Distances vs Time</div>
<div class="a" style="left:1px;top:42px;width:227px;height:14px;background:#a6a6a6"></div><div class="a li" style="top:43px;letter-spacing:-0.11px">Potential Energy vs Time</div>
<div class="a li" style="top:57px">Kinetic Energy vs Time</div>
<div class="a li" style="top:71px;letter-spacing:0.05px">Internuclear Velocities vs Internuclear Distance</div>
<div class="a li" style="top:85px;letter-spacing:0.05px">Internuclear Accelerations vs Internuclear Distance</div>
<div class="a li" style="top:99px">Internuclear Momenta vs Internuclear Distance</div>
<!-- v scrollbar -->
<div class="a" style="left:228px;top:0;width:17px;height:112px;background:#f0f0f0"></div>
<svg class="a" style="left:233px;top:6px" width="8" height="5"><path d="M0 4.5 H8 L4 0.5 Z" fill="#505050"/></svg>
<div class="a" style="left:229px;top:18px;width:15px;height:48px;box-sizing:border-box;border:1px solid #979797;border-radius:2px;background:linear-gradient(90deg,#f3f3f3,#e6e6e6 45%,#d2d2d2 55%,#c4c4c4)"><div class="a" style="left:3px;top:19px;width:7px;height:1px;background:#5a5a5a;box-shadow:0 2px 0 #5a5a5a,0 4px 0 #5a5a5a, 0 1px 0 #fff,0 3px 0 #fff,0 5px 0 #fff"></div></div>
<svg class="a" style="left:233px;top:100px" width="8" height="5"><path d="M0 0.5 H8 L4 4.5 Z" fill="#505050"/></svg>
<!-- h scrollbar -->
<div class="a" style="left:0;top:112px;width:245px;height:17px;background:#f0f0f0"></div>
<svg class="a" style="left:6px;top:115px" width="5" height="9"><path d="M4.5 0 V9 L0.5 4.5 Z" fill="#505050"/></svg>
<div class="a" style="left:18px;top:112px;width:173px;height:15px;box-sizing:border-box;border:1px solid #979797;border-radius:2px;background:linear-gradient(#f3f3f3,#e6e6e6 45%,#d2d2d2 55%,#c4c4c4)"><div class="a" style="left:82px;top:3px;width:1px;height:7px;background:#5a5a5a;box-shadow:2px 0 0 #5a5a5a,4px 0 0 #5a5a5a,1px 0 0 #fff,3px 0 0 #fff,5px 0 0 #fff"></div></div>
<svg class="a" style="left:217px;top:115px" width="5" height="9"><path d="M0.5 0 V9 L4.5 4.5 Z" fill="#505050"/></svg>
</div>
</div>

</div>
<div class="a" style="left:0;top:0;width:907px;height:670px;box-sizing:border-box;border:1px solid #414141;border-radius:5px 5px 0 0"></div>
</div>
<div class="a" style="left:0;top:661px;width:907px;height:1px;background:#414141"></div>
<div class="a" style="left:0;top:662px;width:907px;height:1px;background:#fff"></div>
<div class="a" style="left:600px;top:662px;width:307px;height:1px;background:repeating-linear-gradient(90deg,#444 0 2px,#fff 2px 3px,#666 3px 5px,#fff 5px 9px,#333 9px 10px,#fff 10px 13px)"></div>
<div class="a" style="left:128px;top:662px;width:4px;height:1px;background:#666"></div><div class="a" style="left:418px;top:662px;width:6px;height:1px;background:#777"></div>
</body></html>
